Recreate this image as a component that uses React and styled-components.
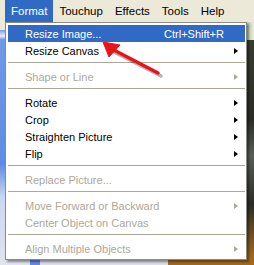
import React from 'react';
import styled, { createGlobalStyle } from 'styled-components';

const GlobalStyle = createGlobalStyle`
  html, body {
    margin: 0;
    padding: 0;
    background: #ece9d8;
  }
  body {
    font-family: "Liberation Sans", Arial, sans-serif;
    font-size: 11px;
  }
`;

const Window = styled.div`
  position: relative;
  width: 254px;
  height: 265px;
  overflow: hidden;
  display: flex;
  flex-direction: column;
`;

const MenuBar = styled.div`
  display: flex;
  height: 22px;
  padding-left: 5px;
  background: #ece9d8;
  flex-shrink: 0;
`;

const BarItem = styled.div`
  display: flex;
  align-items: center;
  padding: 0 6px 1px 6px;
  font-size: 11.5px;
  color: ${({ $active }) => ($active ? '#fff' : '#000')};
  background: ${({ $active }) => ($active ? '#316ac5' : 'transparent')};
`;

const Workspace = styled.div`
  flex: 1;
  display: grid;
  grid-template-columns: 168px 1fr;
`;

const SidePane = styled.div`
  display: flex;
  flex-direction: column;
  background: #d9dce4;
`;

const ToolStrip = styled.div`
  height: 18px;
  background: linear-gradient(#ece9d8, #ece9d8 8px, #7d9ad8 8px, #e8eef8 14px, #6d90dc);
`;

const PanelColumns = styled.div`
  flex: 1;
  display: grid;
  grid-template-columns: 30px 10px 1fr;
`;

const Column = styled.div`
  background: ${({ $fill }) => $fill};
`;

const PhotoPane = styled.div`
  display: flex;
  flex-direction: column;
  background: linear-gradient(#3c4032, #2b2d26 40%, #5a5e55 55%, #2c2d2a 75%, #a06a1c 97%);
`;

const PhotoTop = styled.div`
  height: 18px;
  background: linear-gradient(90deg, #ece9d8 60%, #7aa46a 80%, #ece9d8);
`;

const Dropdown = styled.div`
  position: absolute;
  left: 5px;
  top: 22px;
  width: 242px;
  box-sizing: border-box;
  padding: 2px 1px 2px 2px;
  background: #fff;
  border: 1px solid #8c8a84;
  box-shadow: 2px 2px 2px rgba(0, 0, 0, 0.4);
`;

const Item = styled.div`
  display: flex;
  align-items: center;
  height: 17px;
  padding-left: 17px;
  color: ${({ $disabled, $active }) =>
    $active ? '#fff' : $disabled ? '#aca899' : '#000'};
  background: ${({ $active }) => ($active ? '#316ac5' : 'transparent')};
`;

const Label = styled.span`
  flex: 1;
  white-space: nowrap;
`;

const Shortcut = styled.span`
  white-space: nowrap;
`;

const ArrowCell = styled.span`
  width: 21px;
  display: flex;
  align-items: center;
  padding-left: 10px;
  box-sizing: border-box;
`;

const Triangle = styled.span`
  width: 0;
  height: 0;
  border-left: 4px solid ${({ $disabled }) => ($disabled ? '#aca899' : '#000')};
  border-top: 3.5px solid transparent;
  border-bottom: 3.5px solid transparent;
`;

const Separator = styled.div`
  height: 9px;
  display: flex;
  align-items: flex-start;
  padding-top: 3px;
  box-sizing: border-box;

  &::after {
    content: '';
    flex: 1;
    height: 1px;
    background: #aca899;
  }
`;

const Pointer = styled.svg`
  position: absolute;
  left: 0;
  top: 0;
  pointer-events: none;
`;

const menu = [
  { label: 'Resize Image...', shortcut: 'Ctrl+Shift+R', active: true },
  { label: 'Resize Canvas', sub: true },
  'sep',
  { label: 'Shape or Line', sub: true, disabled: true },
  'sep',
  { label: 'Rotate', sub: true },
  { label: 'Crop', sub: true },
  { label: 'Straighten Picture', sub: true },
  { label: 'Flip', sub: true },
  'sep',
  { label: 'Replace Picture...', disabled: true },
  'sep',
  { label: 'Move Forward or Backward', sub: true, disabled: true },
  { label: 'Center Object on Canvas', disabled: true },
  'sep',
  { label: 'Align Multiple Objects', sub: true, disabled: true },
];

export default function App() {
  return (
    <Window>
      <GlobalStyle />
      <MenuBar>
        <BarItem $active>Format</BarItem>
        <BarItem>Touchup</BarItem>
        <BarItem>Effects</BarItem>
        <BarItem>Tools</BarItem>
        <BarItem>Help</BarItem>
      </MenuBar>

      <Workspace>
        <SidePane>
          <ToolStrip />
          <PanelColumns>
            <Column $fill="linear-gradient(#6e9ae8, #5e8ce2 55%, #c9d8f2 70%, #dfe4ee)" />
            <Column $fill="#5e8ce2" />
            <Column $fill="#dcdde6" />
          </PanelColumns>
        </SidePane>
        <PhotoPane>
          <PhotoTop />
        </PhotoPane>
      </Workspace>

      <Dropdown>
        {menu.map((entry, i) =>
          entry === 'sep' ? (
            <Separator key={i} />
          ) : (
            <Item key={i} $active={entry.active} $disabled={entry.disabled}>
              <Label>{entry.label}</Label>
              {entry.shortcut && <Shortcut>{entry.shortcut}</Shortcut>}
              <ArrowCell>{entry.sub && <Triangle $disabled={entry.disabled} />}</ArrowCell>
            </Item>
          )
        )}
      </Dropdown>

      <Pointer width="254" height="265" viewBox="0 0 254 265">
        <g fill="rgba(0,0,0,0.3)" stroke="rgba(0,0,0,0.3)">
          <line x1="114" y1="52" x2="161" y2="76" strokeWidth="3.5" strokeLinecap="round" />
        </g>
        <g fill="#e8141a" stroke="#e8141a">
          <line x1="110" y1="48" x2="158" y2="73" strokeWidth="3.5" strokeLinecap="round" />
          <polygon points="103,42 120,45 109,57" strokeWidth="1" strokeLinejoin="round" />
        </g>
      </Pointer>
    </Window>
  );
}
